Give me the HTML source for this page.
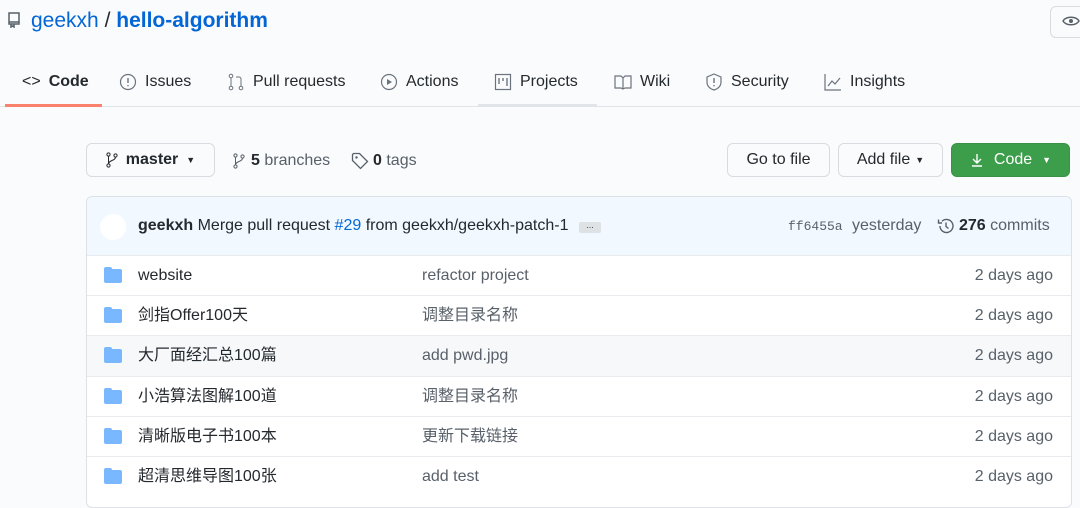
<!DOCTYPE html>
<html><head><meta charset="utf-8"><style>
body{margin:0;width:1080px;height:497px;overflow:hidden;background:#fafbfc;font-family:"Liberation Sans","Noto Sans CJK SC",sans-serif;color:#24292e;position:relative}
.a{position:absolute;white-space:nowrap}
.tab{position:absolute;top:73px;font-size:16px;line-height:18px;color:#24292e;display:flex;align-items:center;gap:8px}
svg{display:block}
.btn{position:absolute;top:143px;height:34px;border:1px solid #d8dbe0;border-radius:6px;background:#fafbfc;font-size:16px;display:flex;align-items:center;justify-content:center;box-sizing:border-box}
.box{position:absolute;left:86px;top:196px;width:984px;height:310px;border:1px solid #dde1e5;border-radius:6px;background:#fff;overflow:hidden}
.row{position:absolute;left:0;width:984px;height:40px;border-top:1px solid #e8eaed;font-size:16px}
.row span{position:absolute;top:10px;line-height:20px;height:20px}
.fold{position:absolute;left:17px;top:13px;width:18px;height:14px;background:#79b8ff;border-radius:2px}
.fold:before{content:"";position:absolute;left:0;top:-2px;width:8px;height:4px;background:#79b8ff;border-radius:2px 2px 0 0}
</style></head><body>
<svg class="a" style="left:7px;top:12px" width="14" height="16" viewBox="0 0 14 16"><path d="M2 1h10v11H2zM2 10h10M4 12v3l1.5-1 1.5 1v-3" fill="none" stroke="#586069" stroke-width="1.5"/></svg>
<div class="a" style="left:31px;top:9px;font-size:21px;color:#0366d6"><span>geekxh</span> <span style="color:#24292e">/</span> <b>hello-algorithm</b></div>
<div class="a" style="left:1050px;top:6px;width:40px;height:30px;border:1px solid #d8dbe0;border-radius:6px;background:#fafbfc"></div>
<svg class="a" style="left:1062px;top:14px" width="18" height="14"><path d="M1 7C4 2 14 2 17 7C14 12 4 12 1 7Z" fill="none" stroke="#586069" stroke-width="1.4"/><circle cx="9" cy="7" r="2" fill="#586069"/></svg>
<div class="a" style="left:0;top:106px;width:1080px;height:1px;background:#e1e4e8"></div>
<div class="a" style="left:5px;top:104px;width:97px;height:3px;background:#f9826c"></div>
<div class="a" style="left:478px;top:104px;width:119px;height:3px;background:#e1e4e8"></div>
<div class="tab" style="left:22px;font-weight:bold"><span style="font-weight:normal">&lt;&gt;</span>Code</div>
<div class="tab" style="left:119px"><svg width="18" height="18"><circle cx="9" cy="9" r="7.5" fill="none" stroke="#6a737d" stroke-width="1.2"/><path d="M9 5v5M9 12v1.2" stroke="#6a737d" stroke-width="1.4"/></svg>Issues</div>
<div class="tab" style="left:227px"><svg width="18" height="18"><circle cx="4" cy="3" r="1.8" fill="none" stroke="#6a737d"/><circle cx="4" cy="15" r="1.8" fill="none" stroke="#6a737d"/><circle cx="14" cy="15" r="1.8" fill="none" stroke="#6a737d"/><path d="M4 5v8M14 13V6a2 2 0 0 0-2-2H9" fill="none" stroke="#6a737d"/></svg>Pull requests</div>
<div class="tab" style="left:380px"><svg width="18" height="18"><circle cx="9" cy="9" r="7.5" fill="none" stroke="#6a737d" stroke-width="1.2"/><path d="M7 6l5 3-5 3z" fill="#6a737d"/></svg>Actions</div>
<div class="tab" style="left:494px"><svg width="18" height="18"><rect x="1.5" y="1.5" width="15" height="15" fill="none" stroke="#6a737d" stroke-width="1.2"/><path d="M5 5v6M9 5v3M13 5v8" stroke="#6a737d" stroke-width="1.4"/></svg>Projects</div>
<div class="tab" style="left:614px"><svg width="18" height="18"><path d="M1 3h6l2 2 2-2h6v12h-6l-2 1-2-1H1z M9 5v11" fill="none" stroke="#6a737d" stroke-width="1.2"/></svg>Wiki</div>
<div class="tab" style="left:705px"><svg width="18" height="18"><path d="M9 1l7 3v5c0 4-3 7-7 8-4-1-7-4-7-8V4z" fill="none" stroke="#6a737d" stroke-width="1.2"/><path d="M9 5v5M9 12v1.2" stroke="#6a737d" stroke-width="1.4"/></svg>Security</div>
<div class="tab" style="left:824px"><svg width="18" height="18"><path d="M1 1v16h16M4 13l4-5 3 3 5-6" fill="none" stroke="#6a737d" stroke-width="1.2"/></svg>Insights</div>

<div class="btn" style="left:86px;width:129px;font-weight:bold;gap:8px"><svg width="12" height="16"><circle cx="2.5" cy="2.5" r="1.6" fill="none" stroke="#24292e"/><circle cx="2.5" cy="13.5" r="1.6" fill="none" stroke="#24292e"/><circle cx="9.5" cy="3.5" r="1.6" fill="none" stroke="#24292e"/><path d="M2.5 4v8M9.5 5c0 4-7 3-7 7" fill="none" stroke="#24292e"/></svg>master <span style="font-size:9px">▼</span></div>
<div class="a" style="left:233px;top:152px;font-size:16px;color:#586069;display:flex;gap:6px;align-items:center"><svg width="12" height="16"><circle cx="2.5" cy="2.5" r="1.6" fill="none" stroke="#586069"/><circle cx="2.5" cy="13.5" r="1.6" fill="none" stroke="#586069"/><circle cx="9.5" cy="3.5" r="1.6" fill="none" stroke="#586069"/><path d="M2.5 4v8M9.5 5c0 4-7 3-7 7" fill="none" stroke="#586069"/></svg><span><b style="color:#24292e">5</b> branches</span></div>
<div class="a" style="left:351px;top:152px;font-size:16px;color:#586069;display:flex;gap:4px;align-items:center"><svg width="18" height="18"><path d="M1.5 2.5v6l8 8 7-7-8-8h-6z" fill="none" stroke="#586069" stroke-width="1.3"/><circle cx="5.5" cy="5.5" r="1.2" fill="#586069"/></svg><span><b style="color:#24292e">0</b> tags</span></div>
<div class="btn" style="left:727px;width:103px">Go to file</div>
<div class="btn" style="left:838px;width:105px;gap:5px">Add file <span style="font-size:9px">▼</span></div>
<div class="btn" style="left:951px;width:119px;background:#3c9d4a;border-color:#3a9246;color:#fff;gap:10px"><svg width="14" height="16"><path d="M7 2v9M3 7l4 4 4-4M2 14h10" fill="none" stroke="#fff" stroke-width="1.4"/></svg>Code <span style="font-size:9px">▼</span></div>

<div class="box">
<div style="position:absolute;left:0;top:0;width:984px;height:59px;background:#f1f8ff"></div>
<div style="position:absolute;left:13px;top:17px;width:26px;height:26px;border-radius:50%;background:#fff"></div>
<div class="a" style="left:51px;top:20px;font-size:16px"><b>geekxh</b> Merge pull request <span style="color:#0366d6">#29</span> from geekxh/geekxh-patch-1</div>
<div class="a" style="left:492px;top:25px;width:22px;height:11px;background:#dfe2e5;border-radius:2px;font-size:9px;line-height:6px;text-align:center;color:#444">...</div>
<div class="a" style="left:701px;top:22px;font-family:'Liberation Mono',monospace;font-size:13px;color:#586069">ff6455a</div>
<div class="a" style="left:765px;top:20px;font-size:16px;color:#586069">yesterday</div>
<svg class="a" style="left:850px;top:20px" width="18" height="18"><path d="M3 9a6.5 6.5 0 1 0 2-4.7" fill="none" stroke="#586069" stroke-width="1.4"/><path d="M1.5 2.5v3.5h3.5" fill="none" stroke="#586069" stroke-width="1.4"/><path d="M9 5.5v4l2.5 2" fill="none" stroke="#586069" stroke-width="1.4"/></svg>
<div class="a" style="left:872px;top:20px;font-size:16px;color:#586069"><b style="color:#24292e">276</b> commits</div>

<div class="row" style="top:58px"><div class="fold"></div><span style="left:51px">website</span><span style="left:335px;color:#586069">refactor project</span><span style="right:18px;color:#586069">2 days ago</span></div>
<div class="row" style="top:98px"><div class="fold"></div><span style="left:51px">剑指Offer100天</span><span style="left:335px;color:#586069">调整目录名称</span><span style="right:18px;color:#586069">2 days ago</span></div>
<div class="row" style="top:138px;background:#f6f8fa"><div class="fold"></div><span style="left:51px">大厂面经汇总100篇</span><span style="left:335px;color:#586069">add pwd.jpg</span><span style="right:18px;color:#586069">2 days ago</span></div>
<div class="row" style="top:179px"><div class="fold"></div><span style="left:51px">小浩算法图解100道</span><span style="left:335px;color:#586069">调整目录名称</span><span style="right:18px;color:#586069">2 days ago</span></div>
<div class="row" style="top:219px"><div class="fold"></div><span style="left:51px">清晰版电子书100本</span><span style="left:335px;color:#586069">更新下载链接</span><span style="right:18px;color:#586069">2 days ago</span></div>
<div class="row" style="top:259px"><div class="fold"></div><span style="left:51px">超清思维导图100张</span><span style="left:335px;color:#586069">add test</span><span style="right:18px;color:#586069">2 days ago</span></div>
</div>
</body></html>
